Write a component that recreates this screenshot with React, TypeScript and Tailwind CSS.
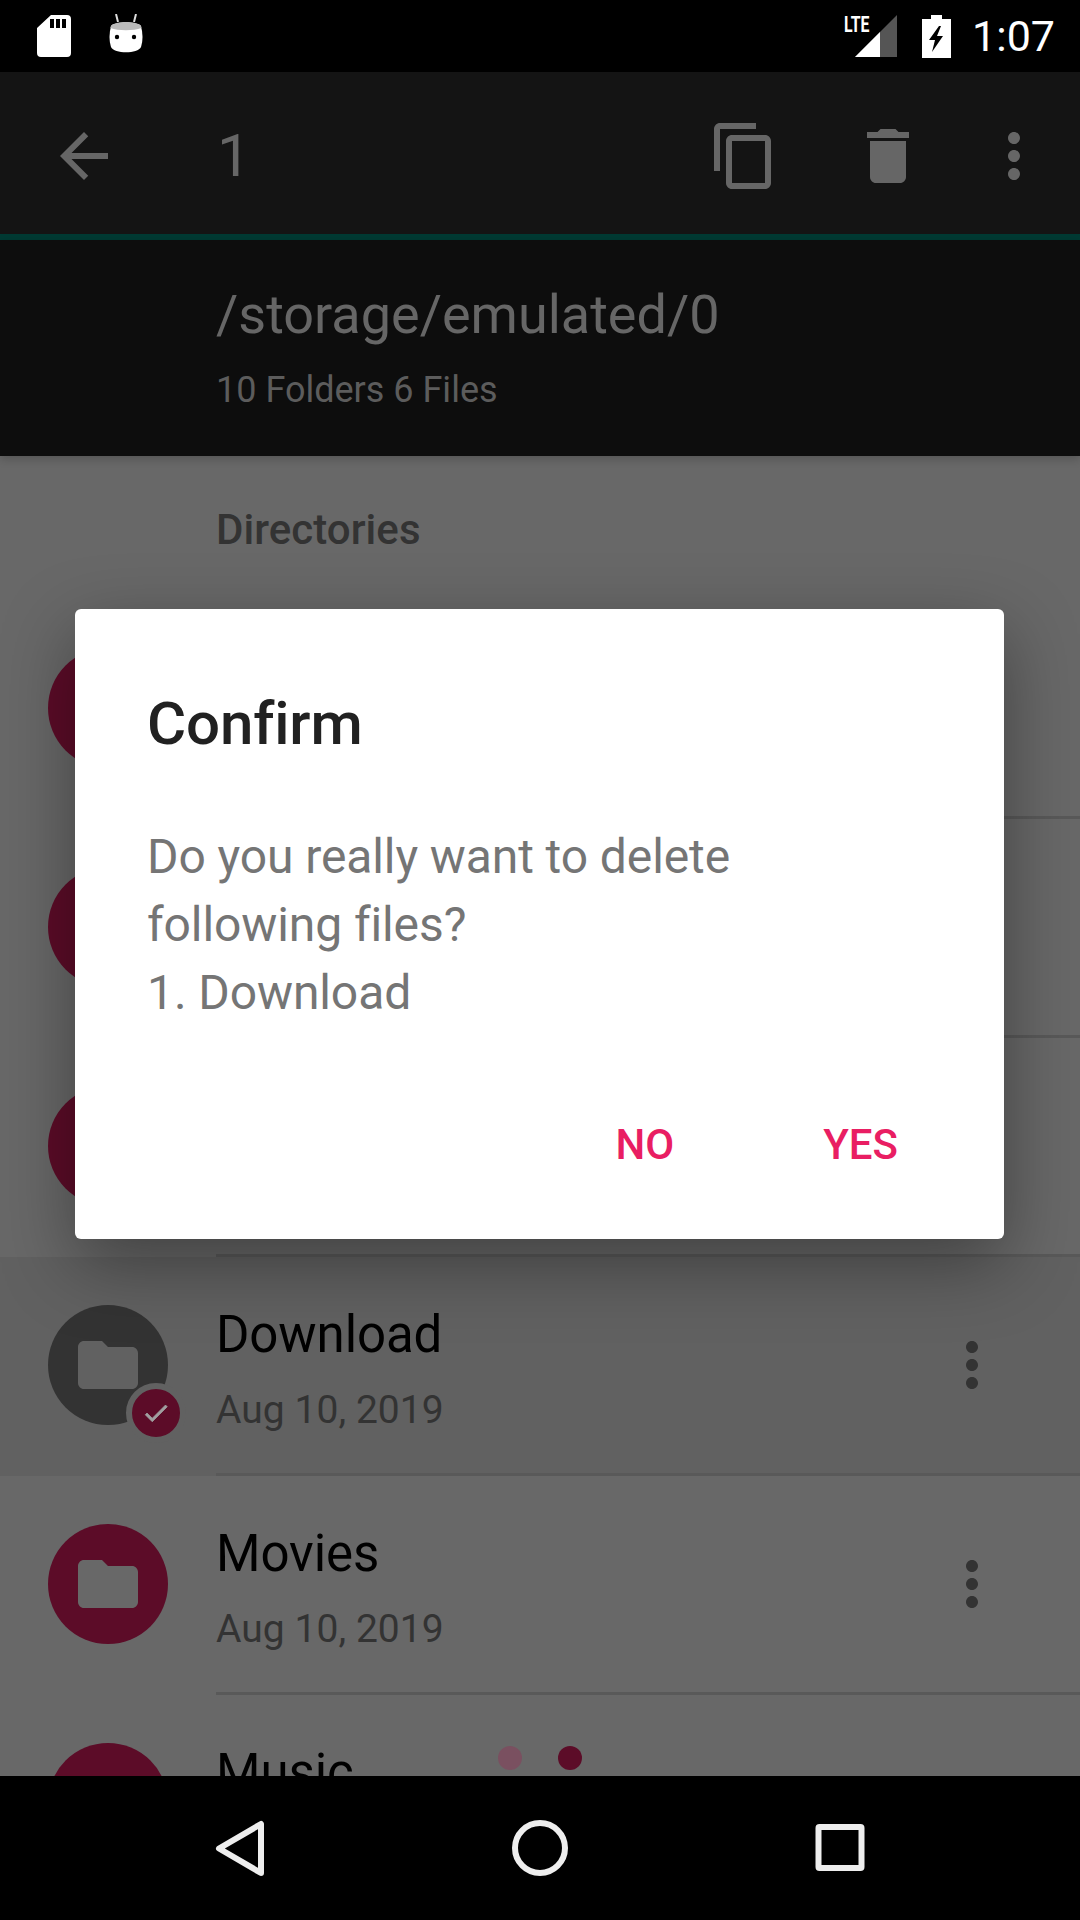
const FOLDER = "M10 4H4c-1.1 0-2 .9-2 2v12c0 1.1.9 2 2 2h16c1.1 0 2-.9 2-2V8c0-1.1-.9-2-2-2h-8l-2-2z";
const MORE = "M12 8c1.1 0 2-.9 2-2s-.9-2-2-2-2 .9-2 2 .9 2 2 2zm0 2c-1.1 0-2 .9-2 2s.9 2 2 2 2-.9 2-2-.9-2-2-2zm0 6c-1.1 0-2 .9-2 2s.9 2 2 2 2-.9 2-2-.9-2-2-2z";

function Icon({ d, className }: { d: string; className: string }) {
  return (
    <svg viewBox="0 0 24 24" className={className} fill="currentColor">
      <path d={d} />
    </svg>
  );
}

function StatusBar() {
  return (
    <div className="h-[72px] shrink-0 bg-black flex items-center text-white">
      <svg viewBox="0 0 34 42" className="w-[34px] h-[42px] ml-[37px]" fill="white">
        <path fillRule="evenodd" d="M14 0h16a4 4 0 0 1 4 4v34a4 4 0 0 1-4 4H4a4 4 0 0 1-4-4V13zM13 4v9h4V4zM19 4v9h4V4zM25 4v9h4V4z" />
      </svg>
      <svg viewBox="0 0 34 40" className="w-[34px] h-[40px] ml-[38px] -mt-[4px]">
        <path d="M7 0l2 8M27 0l-2 8" stroke="#ddd" strokeWidth="2" />
        <path d="M2 12c4-5 26-5 30 0 2 8 2 15 0 21-3 7-27 7-30 0-2-6-2-13 0-21z" fill="white" />
        <path d="M2 12c4-5 26-5 30 0l.4 2c-8 3-23 3-31 0z" fill="#bbb" />
        <circle cx="8" cy="23" r="2.2" fill="black" />
        <circle cx="25" cy="23" r="2.2" fill="black" />
      </svg>
      <div className="flex-1" />
      <div className="relative w-[53px] h-[42px] mr-[24px]">
        <span className="absolute left-[-1px] top-[1px] text-[22px] leading-[18px] font-bold scale-x-[0.72] origin-left">LTE</span>
        <svg viewBox="0 0 42 42" className="absolute left-[10px] top-0 w-[42px] h-[42px]">
          <path d="M0 42L42 0v42z" fill="#555" />
          <path d="M0 42L25 17v25z" fill="white" />
        </svg>
      </div>
      <svg viewBox="0 0 29 43" className="w-[29px] h-[43px]">
        <path fillRule="evenodd" fill="white" d="M9 0h11v4h9v39H0V4h9zM17 11L7 25h6l-3 12 11-16h-6l4-10z" />
      </svg>
      <span className="ml-[21px] mr-[25px] text-[43px] leading-[48px] text-white">1:07</span>
    </div>
  );
}

function Toolbar() {
  return (
    <div className="h-[168px] shrink-0 pt-[6px] bg-[#141414] border-b-[6px] border-[#003a33] flex items-center text-[#666666]">
      <Icon className="w-[72px] h-[72px] ml-[48px]" d="M20 11H7.83l5.59-5.59L12 4l-8 8 8 8 1.41-1.41L7.83 13H20v-2z" />
      <span className="ml-[97px] text-[60px] leading-[72px]">1</span>
      <div className="flex-1" />
      <Icon className="w-[72px] h-[72px]" d="M16 1H4c-1.1 0-2 .9-2 2v14h2V3h12V1zm3 4H8c-1.1 0-2 .9-2 2v14c0 1.1.9 2 2 2h11c1.1 0 2-.9 2-2V7c0-1.1-.9-2-2-2zm0 16H8V7h11v14z" />
      <Icon className="w-[72px] h-[72px] ml-[72px]" d="M6 19c0 1.1.9 2 2 2h8c1.1 0 2-.9 2-2V7H6v12zM19 4h-3.5l-1-1h-5l-1 1H5v2h14V4z" />
      <Icon className="w-[72px] h-[72px] ml-[54px] mr-[30px]" d={MORE} />
    </div>
  );
}

function PathHeader() {
  return (
    <div className="h-[216px] shrink-0 bg-[#0d0d0d] pl-[216px] pt-[41px] text-[#666666] relative z-10 shadow-[0_3px_9px_rgba(0,0,0,0.2)]">
      <div className="text-[54px] leading-[68px]">/storage/emulated/0</div>
      <div className="mt-[19px] text-[36px] leading-[44px] text-[#5c5c5c]">10 Folders 6 Files</div>
    </div>
  );
}

function Row({ name, date, selected }: { name?: string; date?: string; selected?: boolean }) {
  return (
    <div className={selected ? "h-[219px] shrink-0 relative bg-[#616161]" : "h-[219px] shrink-0 relative"}>
      <div className="h-[216px] flex items-center">
        <div className={selected ? "relative ml-[48px] w-[120px] h-[120px] rounded-full bg-[#333333] flex items-center justify-center" : "relative ml-[48px] w-[120px] h-[120px] rounded-full bg-[#5c0c28] flex items-center justify-center"}>
          <Icon d={FOLDER} className={selected ? "w-[72px] h-[72px] text-[#616161]" : "w-[72px] h-[72px] text-[#686868]"} />
          {selected && (
            <div className="absolute left-[78px] top-[78px] w-[60px] h-[60px] rounded-full bg-[#5c0c28] border-[6px] border-[#616161] flex items-center justify-center">
              <svg viewBox="0 0 24 24" className="w-[30px] h-[30px] text-[#a0a0a0]" fill="currentColor" stroke="currentColor" strokeWidth="0.6">
                <path d="M9 16.2L4.8 12l-1.4 1.4L9 19 21 7l-1.4-1.4L9 16.2z" />
              </svg>
            </div>
          )}
        </div>
        <div className="ml-[48px] flex-1 pt-[13px]">
          {name && <div className="text-[51px] leading-[56px] tracking-[-0.1px] text-black translate-y-[1px]">{name}</div>}
          {date && <div className="mt-[20px] text-[39px] leading-[56px] tracking-[0.05px] text-[#333333]">{date}</div>}
        </div>
        {name && <Icon d={MORE} className="w-[72px] h-[72px] mr-[72px] text-[#333333]" />}
      </div>
      <div className="h-[3px] ml-[216px] bg-[#595959]" />
    </div>
  );
}

function ConfirmDialog() {
  return (
    <div className="absolute left-[75px] top-[609px] w-[929px] h-[630px] bg-white rounded-[6px] shadow-[0_24px_72px_rgba(0,0,0,0.38)] flex flex-col pl-[72px] pr-[72px]">
      <div className="mt-[82px] text-[60px] leading-[66px] font-medium tracking-[-0.15px] text-[#212121]">Confirm</div>
      <div className="mt-[66px] text-[48px] leading-[68px] tracking-[-0.1px] text-[#757575]">
        Do you really want to delete<br />following files?<br />1. Download
      </div>
      <div className="flex-1" />
      <div className="flex justify-end mb-[70px] text-[42px] leading-[48px] font-medium text-[#e91e63]">
        <span>NO</span>
        <span className="ml-[149px] mr-[34px]">YES</span>
      </div>
    </div>
  );
}

function NavBar() {
  return (
    <div className="h-[144px] shrink-0 bg-black flex items-center justify-center gap-[228px] relative z-10">
      <svg viewBox="0 0 72 72" className="w-[72px] h-[72px]" fill="none" stroke="#eeeeee" strokeWidth="6" strokeLinejoin="round">
        <path d="M57 12v49L15 36.5z" />
      </svg>
      <svg viewBox="0 0 72 72" className="w-[72px] h-[72px]" fill="none" stroke="#eeeeee" strokeWidth="6">
        <circle cx="36" cy="36" r="25" />
      </svg>
      <svg viewBox="0 0 72 72" className="w-[72px] h-[72px]" fill="none" stroke="#eeeeee" strokeWidth="6" strokeLinejoin="round">
        <rect x="14.5" y="15" width="43" height="41" rx="1" />
      </svg>
    </div>
  );
}

export default function App() {
  return (
    <div className="relative w-[1080px] h-[1920px] overflow-hidden flex flex-col bg-[#686868] [font-family:'Roboto',sans-serif]">
      <StatusBar />
      <Toolbar />
      <PathHeader />
      <div className="flex-1 min-h-0 overflow-hidden">
        <div className="h-[144px] pl-[216px] pt-[50px] text-[42px] leading-[48px] font-medium tracking-[0.05px] text-[#333333]">Directories</div>
        <Row />
        <Row />
        <Row />
        <Row name="Download" date="Aug 10, 2019" selected />
        <Row name="Movies" date="Aug 10, 2019" />
        <Row name="Music" date="Aug 10, 2019" />
      </div>
      <NavBar />
      <ConfirmDialog />
      <div className="absolute left-[498px] top-[1746px] w-[24px] h-[24px] rounded-full bg-[#7a5060]" />
      <div className="absolute left-[558px] top-[1746px] w-[24px] h-[24px] rounded-full bg-[#5c0c28]" />
    </div>
  );
}
